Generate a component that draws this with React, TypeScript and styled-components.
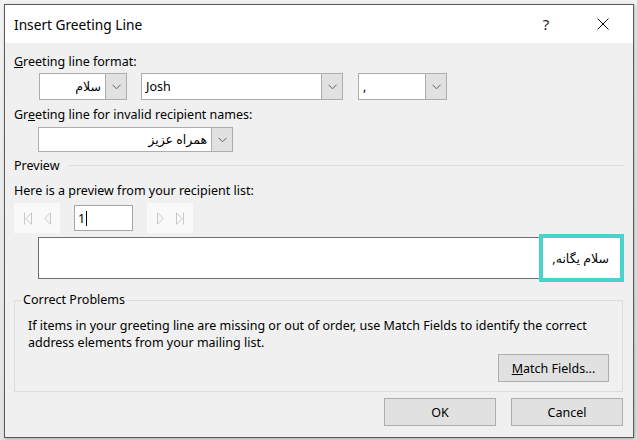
import React from 'react';
import styled, { createGlobalStyle } from 'styled-components';

const Global = createGlobalStyle`
  html, body { margin: 0; padding: 0; background: #e6e6e6; }
  body { font-family: "Noto Sans", "DejaVu Sans", sans-serif; color: #000; }
  #root { width: 637px; height: 440px; }
`;

const Page = styled.div`
  width: 637px;
  height: 440px;
  box-sizing: border-box;
  padding: 4px 0 0 4px;
  background: linear-gradient(#f2f2f2, #e3e3e3);
`;

const Dialog = styled.div`
  width: 630px;
  height: 434px;
  box-sizing: border-box;
  border: 1px solid #5a5a5a;
  background: #f0f0f0;
  display: flex;
  flex-direction: column;
  box-shadow: 1px 1px 3px rgba(0, 0, 0, 0.25);
`;

const TitleBar = styled.div`
  height: 38px;
  flex: none;
  background: #fff;
  display: flex;
  align-items: center;
  padding-left: 9px;
  font-size: 13.7px;
`;

const TitleText = styled.div`
  flex: 1;
  margin-top: 1px;
`;

const TitleButton = styled.div<{ $mr?: number }>`
  width: 46px;
  height: 38px;
  margin-right: ${(p) => p.$mr ?? 0}px;
  display: flex;
  align-items: center;
  justify-content: center;
  font-size: 15px;
  color: #222;
`;

const Body = styled.div`
  flex: 1;
  display: flex;
  flex-direction: column;
  padding: 0 10px 0 9px;
  font-size: 12.5px;
`;

const Label = styled.div<{ $mt: number }>`
  margin-top: ${(p) => p.$mt}px;
  line-height: 16px;
  height: 16px;
  white-space: nowrap;
`;

const Row = styled.div<{ $mt: number; $pl: number; $h: number }>`
  display: flex;
  align-items: center;
  margin-top: ${(p) => p.$mt}px;
  padding-left: ${(p) => p.$pl}px;
  height: ${(p) => p.$h}px;
`;

const ComboBox = styled.div<{ $w: number; $ml?: number }>`
  width: ${(p) => p.$w}px;
  margin-left: ${(p) => p.$ml ?? 0}px;
  height: 100%;
  box-sizing: border-box;
  border: 1px solid #adadad;
  background: #fff;
  display: flex;
`;

const ComboField = styled.div<{ $rtl?: boolean }>`
  flex: 1;
  display: flex;
  align-items: center;
  justify-content: ${(p) => (p.$rtl ? 'flex-end' : 'flex-start')};
  padding: 0 4px 1px 4px;
  white-space: nowrap;
  overflow: hidden;
  font-size: 12.5px;
`;

const ComboArrow = styled.div`
  width: 20px;
  flex: none;
  background: #e1e1e1;
  border-left: 1px solid #adadad;
  display: flex;
  align-items: center;
  justify-content: center;
`;

const Chevron = () => (
  <svg width="9" height="6" viewBox="0 0 9 6">
    <path d="M0.5 0.8 L4.5 4.8 L8.5 0.8" fill="none" stroke="#606060" strokeWidth="1" />
  </svg>
);

const Combo = ({ w, ml, text, rtl }: { w: number; ml?: number; text: string; rtl?: boolean }) => (
  <ComboBox $w={w} $ml={ml}>
    <ComboField $rtl={rtl}>
      <span dir={rtl ? 'rtl' : 'ltr'}>{text}</span>
    </ComboField>
    <ComboArrow>
      <Chevron />
    </ComboArrow>
  </ComboBox>
);

const LegendRow = styled.div`
  margin-top: 5px;
  height: 16px;
  display: flex;
  align-items: center;
  gap: 10px;
`;

const LegendLine = styled.div`
  flex: 1;
  height: 1px;
  background: #dcdcdc;
  margin-right: -1px;
`;

const NavGroup = styled.div<{ $ml: number }>`
  width: 46px;
  height: 100%;
  margin-left: ${(p) => p.$ml}px;
  background: #f9f9f9;
  display: flex;
  align-items: center;
  justify-content: space-around;
  padding: 0 4px;
  box-sizing: border-box;
`;

const RecordInput = styled.div`
  width: 59px;
  height: 26px;
  margin-left: 14px;
  box-sizing: border-box;
  border: 1px solid #a6a6a6;
  background: #fff;
  display: flex;
  align-items: center;
  padding-left: 3px;
  font-size: 12.5px;
`;

const Caret = styled.span`
  display: inline-block;
  width: 1px;
  height: 15px;
  background: #000;
  margin-left: 1px;
`;

const NavIcon = ({ dir, bar }: { dir: 'l' | 'r'; bar?: boolean }) => (
  <svg width="10" height="13" viewBox="0 0 10 13">
    {dir === 'l' ? (
      <>
        {bar && <line x1="1.5" y1="0.5" x2="1.5" y2="12.5" stroke="#c8c8c8" />}
        <path d="M8.5 0.8 L2.8 6.5 L8.5 12.2 Z" fill="none" stroke="#c8c8c8" />
      </>
    ) : (
      <>
        {bar && <line x1="8.5" y1="0.5" x2="8.5" y2="12.5" stroke="#c8c8c8" />}
        <path d="M1.5 0.8 L7.2 6.5 L1.5 12.2 Z" fill="none" stroke="#c8c8c8" />
      </>
    )}
  </svg>
);

const PreviewBox = styled.div`
  position: relative;
  margin: 4px 0 0 24px;
  height: 42px;
  box-sizing: border-box;
  border: 1px solid #6e6e6e;
  background: #fff;
`;

const Highlight = styled.div`
  position: absolute;
  right: -2px;
  top: -4px;
  width: 85px;
  height: 48px;
  box-sizing: border-box;
  border: 4px solid #4ad3cc;
  background: #fff;
  display: flex;
  align-items: center;
  justify-content: flex-end;
  padding-right: 11px;
  font-size: 12.5px;
`;

const Group = styled.fieldset`
  margin: 13px 0 0 0;
  padding: 9px 13px 9px 13px;
  border: 1px solid #dcdcdc;
  display: flex;
  flex-direction: column;
  min-width: 0;
`;

const GroupLegend = styled.legend`
  margin-left: -6px;
  padding: 0 1px;
  line-height: 16px;
  font-size: 12.5px;
`;

const GroupText = styled.div`
  line-height: 17px;
  white-space: nowrap;
`;

const Button = styled.div<{ $w: number }>`
  width: ${(p) => p.$w}px;
  height: 28px;
  box-sizing: border-box;
  border: 1px solid #adadad;
  background: #e1e1e1;
  display: flex;
  align-items: center;
  justify-content: center;
  font-size: 12.5px;
`;

const GroupButtonRow = styled.div`
  display: flex;
  justify-content: flex-end;
  margin-top: 3px;
`;

const Footer = styled.div`
  display: flex;
  justify-content: flex-end;
  gap: 15px;
  margin-top: 6px;
`;

export default function App() {
  return (
    <>
      <Global />
      <Page>
        <Dialog>
          <TitleBar>
            <TitleText>Insert Greeting Line</TitleText>
            <TitleButton $mr={11}>?</TitleButton>
            <TitleButton>
              <svg width="12" height="12" viewBox="0 0 12 12">
                <path d="M0.5 0.5 L11.5 11.5 M11.5 0.5 L0.5 11.5" stroke="#111" strokeWidth="1" />
              </svg>
            </TitleButton>
            <div style={{ width: 7 }} />
          </TitleBar>
          <Body>
            <Label $mt={11}>
              <u>G</u>reeting line format:
            </Label>
            <Row $mt={3} $pl={25} $h={27}>
              <Combo w={88} text="سلام" rtl />
              <Combo w={202} ml={14} text="Josh" />
              <Combo w={89} ml={15} text="," />
            </Row>
            <Label $mt={7}>
              Gr<u>e</u>eting line for invalid recipient names:
            </Label>
            <Row $mt={4} $pl={24} $h={25}>
              <Combo w={195} text="همراه عزیز" rtl />
            </Row>
            <LegendRow>
              <span>Preview</span>
              <LegendLine />
            </LegendRow>
            <Label $mt={10}>Here is a preview from your recipient list:</Label>
            <Row $mt={4} $pl={0} $h={30}>
              <NavGroup $ml={0}>
                <NavIcon dir="l" bar />
                <NavIcon dir="l" />
              </NavGroup>
              <RecordInput>
                1<Caret />
              </RecordInput>
              <NavGroup $ml={14}>
                <NavIcon dir="r" />
                <NavIcon dir="r" bar />
              </NavGroup>
            </Row>
            <PreviewBox>
              <Highlight>
                <span dir="rtl">سلام یگانه,</span>
              </Highlight>
            </PreviewBox>
            <Group>
              <GroupLegend>Correct Problems</GroupLegend>
              <GroupText>
                If items in your greeting line are missing or out of order, use Match Fields to identify the correct
                <br />
                address elements from your mailing list.
              </GroupText>
              <GroupButtonRow>
                <Button $w={111}>
                  <u>M</u>atch Fields...
                </Button>
              </GroupButtonRow>
            </Group>
            <Footer>
              <Button $w={112}>OK</Button>
              <Button $w={112}>Cancel</Button>
            </Footer>
          </Body>
        </Dialog>
      </Page>
    </>
  );
}
